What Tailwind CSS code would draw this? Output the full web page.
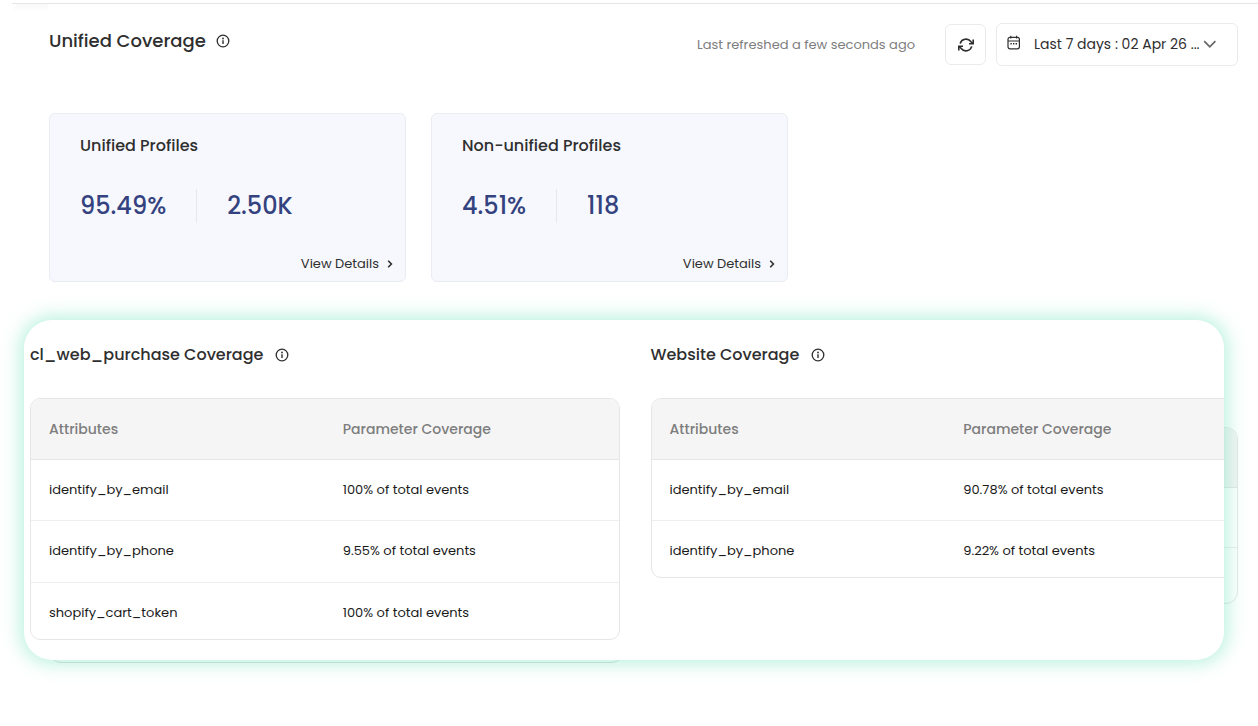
<!DOCTYPE html>
<html lang="en">

<head>
    <meta charset="UTF-8">
    <meta name="viewport" content="width=device-width, initial-scale=1.0">
    <title>Unified Coverage</title>
    <script src="https://cdn.jsdelivr.net/npm/@tailwindcss/browser@4"></script>
</head>

<body class="min-h-screen bg-white font-['Poppins','Inter',sans-serif] text-[#2f2f2f] overflow-x-hidden">

    <!-- Shared icons -->
    <svg class="hidden" aria-hidden="true">
        <symbol id="info" viewBox="0 0 14 14">
            <circle cx="7" cy="7" r="5.8" fill="none" stroke="currentColor" stroke-width="1.3" />
            <path d="M7 6.3v3.6" stroke="currentColor" stroke-width="1.4" />
            <circle cx="7" cy="4.5" r="0.9" fill="currentColor" />
        </symbol>
        <symbol id="chevron" viewBox="0 0 8 8">
            <path d="M2.2 0.8l3.2 3.2-3.2 3.2" fill="none" stroke="currentColor" stroke-width="1.6" />
        </symbol>
    </svg>

    <div class="pt-[3px] pl-3">
        <div class="h-px rounded-tl-xl bg-[#e6e6e6]"></div>
        <div class="h-2 w-9 rounded-tl-xl bg-linear-to-b from-[#f8f8f8] to-white"></div>
    </div>

    <header class="-mt-2 pt-[19px] pl-[49px] pr-5 flex items-center justify-between">
        <div class="flex items-center gap-[10px] pb-2">
            <h1 class="text-lg leading-7 font-medium">Unified Coverage</h1>
            <button type="button" aria-label="About unified coverage"><svg class="size-[14px]"><use href="#info" /></svg></button>
        </div>
        <div class="flex items-center">
            <p class="mr-[30px] text-[13px] text-[#7d7d7d]">Last refreshed a few seconds ago</p>
            <button type="button" aria-label="Refresh"
                class="mr-[10px] size-[41px] flex items-center justify-center rounded-md border border-[#ebebeb]">
                <svg class="size-[18px]" viewBox="0 0 18 18" fill="none" stroke="currentColor" stroke-width="1.6">
                    <path d="M3.2 7.6A6 6 0 0 1 13.8 5.6L15.8 7.8M16.2 3.6v4.2h-4.2" />
                    <path d="M14.8 10.4A6 6 0 0 1 4.2 12.4L2.2 10.2M1.8 14.4v-4.2h4.2" />
                </svg>
            </button>
            <div class="relative">
                <svg class="pointer-events-none absolute left-[10px] top-3 size-4" viewBox="0 0 16 16" fill="none"
                    stroke="currentColor" stroke-width="1.2">
                    <rect x="2" y="2.4" width="11.4" height="11.4" rx="2" />
                    <path d="M2 6h11.4M4.8 0.8v2.6M10.6 0.8v2.6" />
                    <path d="M4.4 8.8h1.4M7 8.8h1.4M9.6 8.8h1.4" stroke-width="1.5" />
                </svg>
                <select aria-label="Date range"
                    class="w-[242px] h-[43px] appearance-none rounded-md border border-[#ebebeb] bg-white pb-[2px] pl-[37px] pr-9 text-sm">
                    <option>Last 7 days : 02 Apr 26 ...</option>
                </select>
                <svg class="pointer-events-none absolute right-5 top-[13px] size-4" viewBox="0 0 16 16" fill="none"
                    stroke="#666" stroke-width="1.7">
                    <path d="M2.2 5.2l5.6 5.6 5.6-5.6" />
                </svg>
            </div>
        </div>
    </header>

    <section class="mt-[47px] ml-[49px] flex gap-[25px]">
        <article
            class="w-[357px] rounded-md border border-[#e9ecf3] bg-[#f7f8fd] pt-5 pb-[7px] pl-[30px] pr-[11px]">
            <h2 class="text-base leading-6 font-medium">Unified Profiles</h2>
            <div class="mt-[30px] flex items-center text-2xl leading-9 font-medium text-[#34437f]">
                <span>95.49%</span>
                <span class="mx-[30px] h-[34px] w-px bg-[#e6e8ee]"></span>
                <span>2.50K</span>
            </div>
            <div class="mt-[30px] flex justify-end">
                <a href="#" class="flex items-center gap-[7px] text-[13px] leading-5">View Details
                    <svg class="size-2"><use href="#chevron" /></svg></a>
            </div>
        </article>
        <article
            class="w-[357px] rounded-md border border-[#e9ecf3] bg-[#f7f8fd] pt-5 pb-[7px] pl-[30px] pr-[11px]">
            <h2 class="text-base leading-6 font-medium">Non-unified Profiles</h2>
            <div class="mt-[30px] flex items-center text-2xl leading-9 font-medium text-[#34437f]">
                <span>4.51%</span>
                <span class="mx-[30px] h-[34px] w-px bg-[#e6e8ee]"></span>
                <span>118</span>
            </div>
            <div class="mt-[30px] flex justify-end">
                <a href="#" class="flex items-center gap-[7px] text-[13px] leading-5">View Details
                    <svg class="size-2"><use href="#chevron" /></svg></a>
            </div>
        </article>
    </section>

    <div class="relative mt-[38px] ml-6 mr-[34px]">
        <!-- Page tables that stay behind the highlighted panel -->
        <div class="absolute -right-[14px] top-[107px] h-[177px] w-24 rounded-xl border border-[#e6e6e6]">
            <div class="h-[60px] rounded-t-xl border-b border-[#e6e6e6] bg-[#f4f4f4]"></div>
            <div class="h-[60px] border-b border-[#eee]"></div>
        </div>
        <div class="absolute left-[25px] -bottom-[3px] h-24 w-[575px] rounded-xl border border-[#ddd]"></div>

        <main
            class="relative overflow-hidden rounded-[28px] bg-white pt-[23px] pb-[20px] pl-[6px] shadow-[0_0_18px_4px_rgba(80,220,170,0.38)]">
            <div class="-mr-4 grid grid-cols-2 items-start gap-[31px]">
                <section>
                    <div class="flex items-center gap-3">
                        <h2 class="text-base leading-6 font-medium">cl_web_purchase Coverage</h2>
                        <button type="button" aria-label="About cl_web_purchase coverage"><svg class="size-[14px]"><use href="#info" /></svg></button>
                    </div>
                    <div class="mt-[31px] overflow-hidden rounded-[10px] border border-[#e6e6e6]">
                        <table class="w-full table-fixed text-left text-[13px] text-[#1a1a1a]">
                            <thead>
                                <tr class="h-[60px] border-b border-[#e6e6e6] bg-[#f5f5f5] text-sm text-[#7d7d7d]">
                                    <th class="px-[18px] font-medium">Attributes</th>
                                    <th class="px-[18px] font-medium">Parameter Coverage</th>
                                </tr>
                            </thead>
                            <tbody>
                                <tr class="h-[61px] border-b border-[#eee]">
                                    <td class="px-[18px]">identify_by_email</td>
                                    <td class="px-[18px]">100% of total events</td>
                                </tr>
                                <tr class="h-[62px] border-b border-[#eee]">
                                    <td class="px-[18px]">identify_by_phone</td>
                                    <td class="px-[18px]">9.55% of total events</td>
                                </tr>
                                <tr class="h-[57px]">
                                    <td class="px-[18px] pt-1">shopify_cart_token</td>
                                    <td class="px-[18px] pt-1">100% of total events</td>
                                </tr>
                            </tbody>
                        </table>
                    </div>
                </section>
                <section>
                    <div class="flex items-center gap-3">
                        <h2 class="text-base leading-6 font-medium">Website Coverage</h2>
                        <button type="button" aria-label="About website coverage"><svg class="size-[14px]"><use href="#info" /></svg></button>
                    </div>
                    <div class="mt-[31px] overflow-hidden rounded-[10px] border border-[#e6e6e6]">
                        <table class="w-full table-fixed text-left text-[13px] text-[#1a1a1a]">
                            <thead>
                                <tr class="h-[60px] border-b border-[#e6e6e6] bg-[#f5f5f5] text-sm text-[#7d7d7d]">
                                    <th class="px-[18px] font-medium">Attributes</th>
                                    <th class="px-[18px] font-medium">Parameter Coverage</th>
                                </tr>
                            </thead>
                            <tbody>
                                <tr class="h-[61px] border-b border-[#eee]">
                                    <td class="px-[18px]">identify_by_email</td>
                                    <td class="px-[18px]">90.78% of total events</td>
                                </tr>
                                <tr class="h-[57px]">
                                    <td class="px-[18px] pt-1">identify_by_phone</td>
                                    <td class="px-[18px] pt-1">9.22% of total events</td>
                                </tr>
                            </tbody>
                        </table>
                    </div>
                </section>
            </div>
        </main>
    </div>

</body>

</html>
